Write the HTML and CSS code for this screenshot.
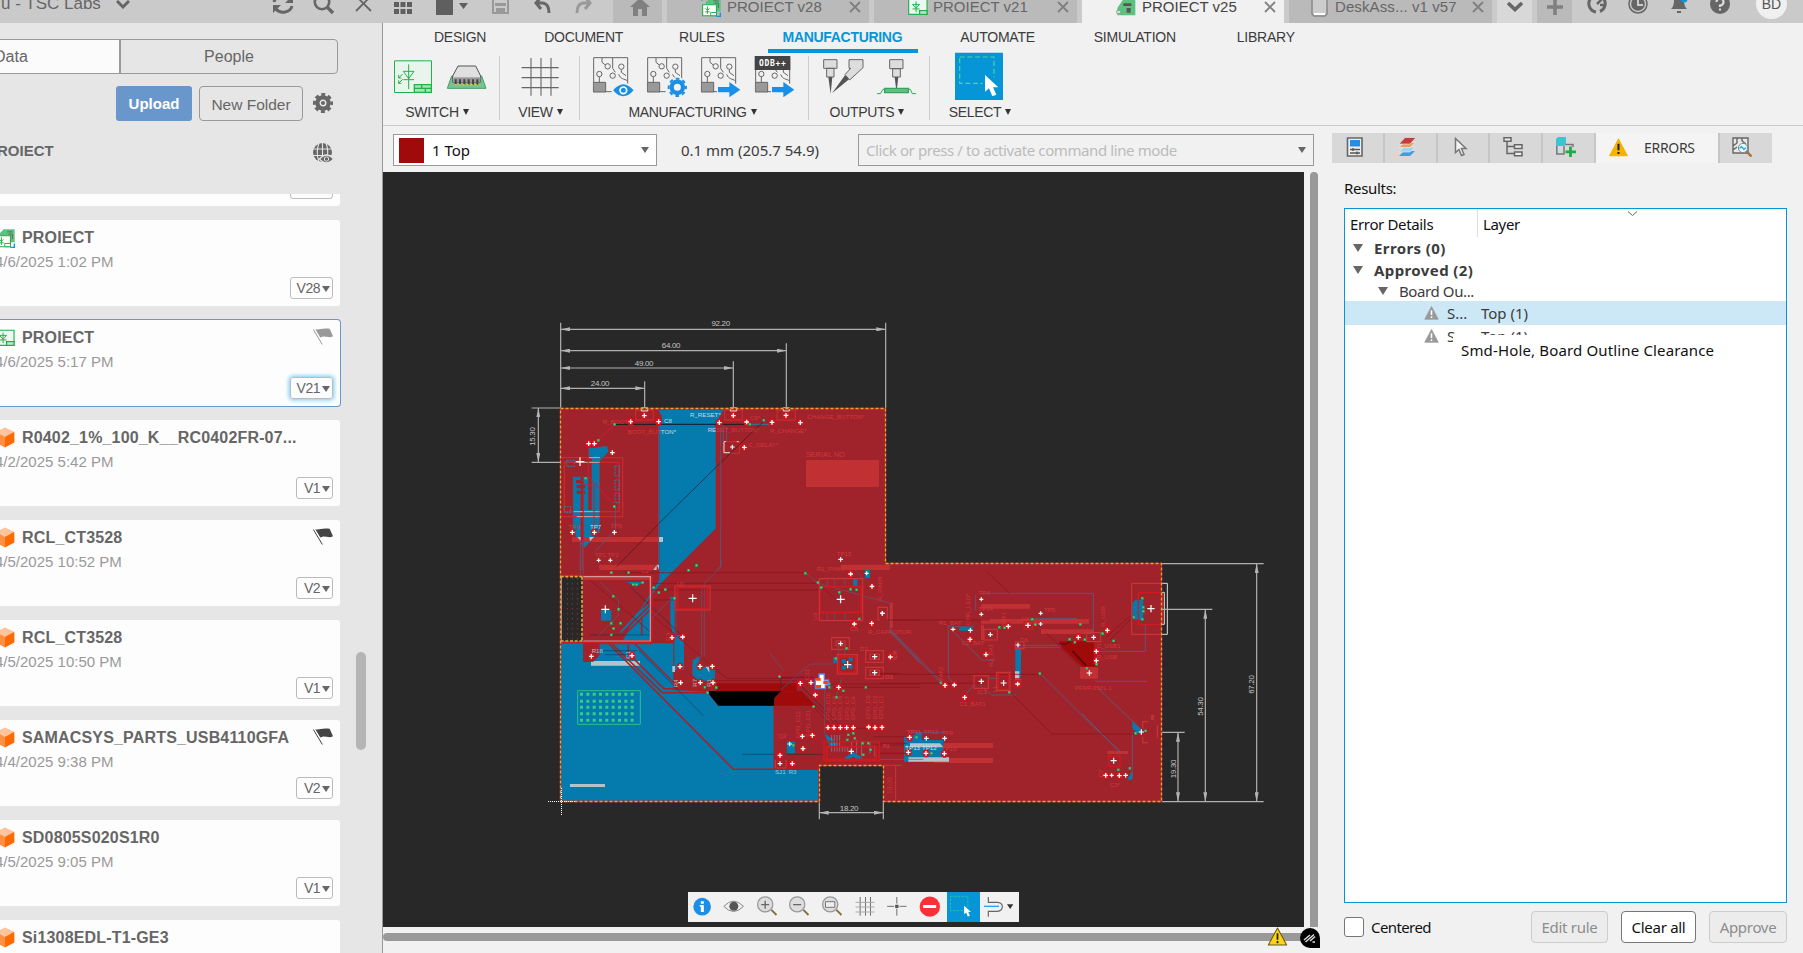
FILE: index.html
```
<!DOCTYPE html>
<html lang="en">
<head>
<meta charset="utf-8">
<title>PROIECT v25</title>
<link rel="stylesheet" href="styles.css">
</head>
<body>
<svg class="defs" width="0" height="0">
  <defs>
    <symbol id="cube" viewBox="0 0 60 62"><path d="M30 1 58 14 30 29 3 14Z" fill="#ffc49c"/><path d="M3 14 30 29V61L3 46Z" fill="#ff8f45"/><path d="M30 29 58 14V46L30 61Z" fill="#ff6a00"/></symbol>
    <symbol id="flag" viewBox="0 0 60 50"><path d="M1 4 28 49" stroke="currentColor" stroke-width="3"/><path d="M7 3C20 6 26-2 50 2L60 24C46 32 36 20 22 28Z" fill="currentColor"/></symbol>
    <symbol id="x" viewBox="0 0 12 12"><path d="M1 1 11 11M11 1 1 11" stroke="currentColor" stroke-width="1.8" fill="none"/></symbol>
    <symbol id="brd" viewBox="0 0 62 62"><path d="M15 16 27 4H61V44H15Z" fill="#5cc280"/><path d="M38 12H54M42 19H54V34" stroke="#666" stroke-width="3" fill="none"/><path d="M5 24H48V58H5Z" fill="#fff" stroke="#22b14c" stroke-width="3.5"/><path d="M13 35 20 42 26 35M20 29V52M13 46H27" stroke="#22b14c" stroke-width="3" fill="none"/><path d="M30 48H48V58H30Z" fill="#fff" stroke="#22b14c" stroke-width="3"/><path d="M48 60H60V48M3 12V2H14" stroke="#1a8fe8" stroke-width="4" fill="none"/></symbol>
    <symbol id="sch" viewBox="0 0 62 54"><path d="M2 3H59V50H2Z" fill="#eef8f0" stroke="#22b14c" stroke-width="3.5"/><path d="M14 19H36L25 31ZM14 33H36M25 10V43" stroke="#22b14c" stroke-width="3" fill="none"/><path d="M36 38H59V50H36Z" fill="#bfe8cb" stroke="#22b14c" stroke-width="4"/></symbol>
    <symbol id="pcb" viewBox="0 0 126 126"><path d="M3 6H105V84M3 6V80M57 108H36M60 6V38M60 38 68 50M28 6V20L38 28M78 56C84 72 94 68 105 76M20 62V80M86 42V50L100 60" fill="none" stroke="#666" stroke-width="3"/><path d="M2 80H39V109H2Z" fill="#999" stroke="#666" stroke-width="3"/><g fill="#f1f1f1" stroke="#666" stroke-width="3"><circle cx="45" cy="32" r="8"/><circle cx="86" cy="33" r="8"/><circle cx="20" cy="55" r="8"/><circle cx="60" cy="60" r="8"/></g></symbol>
    <symbol id="arrow" viewBox="0 0 68 46"><path d="M0 15H34V0L67 23 34 46V31H0Z" fill="#1a8fe8"/></symbol>
    <symbol id="lens" viewBox="0 0 64 64"><path d="M46 44 62 60" stroke="#8c6d46" stroke-width="6"/><circle cx="27" cy="27" r="23.5" fill="#ddd" stroke="#999" stroke-width="4"/></symbol>
    <symbol id="cursor" viewBox="0 0 40 64"><path d="M0 0V50L12 40 22 64 34 59 24 37H40Z" fill="#fff"/></symbol>
    <symbol id="warn" viewBox="0 0 56 54"><path d="M28 2 54 51H2Z" fill="currentColor" stroke="currentColor" stroke-width="3" stroke-linejoin="round"/><path d="M28 16V35M28 40V46" stroke="var(--mark)" stroke-width="6"/></symbol>
    <marker id="pad" markerUnits="userSpaceOnUse" markerWidth="24" markerHeight="26" refX="12" refY="13"><ellipse cx="12" cy="13" rx="10" ry="12" fill="#cc151c"/><path d="M12 6V20M5 13H19" stroke="#fff" stroke-width="4"/></marker>
    <marker id="via" markerUnits="userSpaceOnUse" markerWidth="9" markerHeight="9" refX="4.5" refY="4.5"><path d="M0 0H9V9H0Z" fill="#2a9d55"/><path d="M2 2H6V6H2Z" fill="#5ee08c"/></marker>
    <marker id="tip" markerUnits="userSpaceOnUse" markerWidth="28" markerHeight="12" refX="28" refY="6" orient="auto-start-reverse"><path d="M28 6 0 0V12Z" fill="#b4b4b4"/></marker>
  </defs>
</svg>

<header class="topbar">
  <div class="team"><span>u - TSC Labs</span>
    <svg width="14" height="10" viewBox="0 0 14 10"><path d="M1 1 7 7 13 1" class="ic" stroke-width="3"/></svg></div>
  <div class="team-tools">
    <svg width="22" height="22" viewBox="0 0 22 22"><path d="M2 9A9 8 0 0 1 18 6M20 13A9 8 0 0 1 4 16" class="ic" stroke-width="3"/><path d="M21 2V10H13ZM1 20V12H9Z" fill="#666"/></svg>
    <svg width="22" height="22" viewBox="0 0 22 22"><circle cx="9" cy="9" r="7.2" class="ic" stroke-width="2.6"/><path d="M14 14 20 20" class="ic" stroke-width="3.4"/></svg>
    <svg width="17" height="17" viewBox="0 0 17 17"><path d="M1 1 16 16M16 1 1 16" class="ic" stroke-width="1.8"/></svg>
  </div>
  <div class="quick">
    <svg class="q1" width="18" height="19" viewBox="0 0 18 19"><path d="M0 0H5V5H0ZM6.500 0H11.500V5H6.500ZM13 0H18V5H13ZM0 7H5V12H0ZM6.500 7H11.500V12H6.500ZM13 7H18V12H13ZM0 14H5V19H0ZM6.500 14H11.500V19H6.500ZM13 14H18V19H13Z" fill="#5f5f5f"/></svg>
    <svg class="q2" width="32" height="20" viewBox="0 0 32 20"><path d="M0 0H17V20H0ZM23 8H32L27.500 14Z" fill="#5f5f5f"/></svg>
    <svg class="q3" width="17" height="19" viewBox="0 0 17 19"><path d="M1 1H14L16 3V18H1Z" fill="none" stroke="#999" stroke-width="2"/><path d="M3 8H14V11H3ZM4 13H13V18H4Z" fill="#999"/></svg>
    <svg class="q4" width="17" height="18" viewBox="0 0 17 18"><path d="M7 1 2 7 7 13M2 7H9Q15 8 15 17" class="ic" stroke-width="3"/></svg>
    <svg class="q5" width="17" height="18" viewBox="0 0 17 18"><path d="M10 1 15 7 10 13M15 7H8Q2 8 2 17" fill="none" stroke="#999" stroke-width="3"/></svg>
  </div>
  <div class="tabs">
    <div class="tab home"><svg width="20" height="18" viewBox="0 0 20 18"><path d="M10 0 20 9H17V18H12V11H8V18H3V9H0Z" fill="#808080"/></svg></div>
    <div class="tab"><svg class="ti" width="20" height="20"><use href="#brd"/></svg><span>PROIECT v28</span><svg class="close" width="12" height="12"><use href="#x"/></svg></div>
    <div class="tab t21"><svg class="ti" width="20" height="18"><use href="#sch"/></svg><span>PROIECT v21</span><svg class="close" width="12" height="12"><use href="#x"/></svg></div>
    <div class="tab active"><svg class="ti" width="20" height="18" viewBox="0 0 60 54"><path d="M4 30 20 6H58V52H4Z" fill="#5cc280"/><path d="M22 16H46V24H22ZM32 30H44V44H32Z" fill="#555"/><path d="M2 38H14V46H2Z" fill="#e8e8e8" stroke="#888" stroke-width="2"/></svg><span>PROIECT v25</span><svg class="close" width="12" height="12"><use href="#x"/></svg></div>
    <div class="tab desk"><svg class="ti" width="17" height="21" viewBox="0 0 17 21"><path d="M1 0H16V18L14 20H3L1 18Z" fill="#ccc" stroke="#888" stroke-width="1.500"/><path d="M3 17H14V19H3Z" fill="#fff"/></svg><span>DeskAss... v1 v57</span><svg class="close" width="12" height="12"><use href="#x"/></svg></div>
    <div class="mini light"><svg width="16" height="10" viewBox="0 0 16 10"><path d="M1 1 8 7.500 15 1" class="ic" stroke-width="3.600"/></svg></div>
    <div class="mini"><svg width="16" height="16" viewBox="0 0 16 16"><path d="M8 0V16M0 8H16" stroke="#808080" stroke-width="3.600"/></svg></div>
  </div>
  <div class="account">
    <svg width="20" height="20" viewBox="0 0 20 20"><path d="M4 4A8.500 8.500 0 0 0 9 18M13 17.500A8.500 8.500 0 0 0 16 4" class="ic" stroke-width="3"/><path d="M10 10 17 3M13 11H18" class="ic" stroke-width="2.500"/></svg>
    <svg width="20" height="20" viewBox="0 0 20 20"><circle cx="10" cy="10" r="9" class="ic" stroke-width="1.500"/><circle cx="10" cy="10" r="6.800" fill="#666"/><path d="M10 5V11H15" fill="none" stroke="#ccc" stroke-width="2"/></svg>
    <svg width="20" height="20" viewBox="0 0 20 20"><path d="M2 15Q5 12 5 7A5 5 0 0 1 15 7Q15 12 18 15ZM8 17H12V19H8Z" fill="#666"/><circle cx="15" cy="5" r="3.500" fill="#0696d7"/></svg>
    <svg width="20" height="20" viewBox="0 0 20 20"><circle cx="10" cy="10" r="10" fill="#666"/><path d="M6.500 8A3.500 3.500 0 1 1 10 11.500V13" fill="none" stroke="#ddd" stroke-width="2.200"/><path d="M9 14.500H11V16.500H9Z" fill="#ddd"/></svg>
    <span class="avatar">BD</span>
  </div>
</header>

<div class="app">
<aside class="side">
  <div class="seg"><span class="on">Data</span><span>People</span></div>
  <div class="actions">
    <span class="btn-up">Upload</span><span class="btn-nf">New Folder</span>
    <svg width="20" height="20" viewBox="0 0 20 20"><circle cx="10" cy="10" r="5.600" fill="none" stroke="#666" stroke-width="4.200"/><circle cx="10" cy="10" r="8.600" fill="none" stroke="#666" stroke-width="2.800" stroke-dasharray="3.900 2.850" stroke-dashoffset="1.950"/><circle cx="10" cy="10" r="2" fill="#666"/></svg>
  </div>
  <div class="crumb"><span>PROIECT</span>
    <svg width="20" height="20" viewBox="0 0 20 20"><circle cx="9.500" cy="9.500" r="9.500" fill="#666"/><path d="M0 6H19M0 12.500H19M9.500 0V19M6 0Q2.500 9.500 6 19M13 0Q16.500 9.500 13 19" stroke="#e6e6e6" stroke-width="1.100" fill="none"/><path d="M6.500 16Q13.500 8 20.500 16 13.500 24 6.500 16Z" fill="#666" stroke="#e6e6e6" stroke-width="1.300"/><circle cx="13.500" cy="16" r="2.200" fill="#666" stroke="#e6e6e6"/></svg></div>
  <div class="scroller">
  <div class="list">
    <div class="card first"><div class="ver w"></div></div>
    <div class="card"><b><svg width="20" height="20"><use href="#brd"/></svg>PROIECT</b><i>4/6/2025 1:02 PM</i><div class="ver w">V28<s></s></div></div>
    <div class="card sel"><b><svg width="20" height="18"><use href="#sch"/></svg>PROIECT</b><svg class="flag dim" width="20" height="17"><use href="#flag"/></svg><i>4/6/2025 5:17 PM</i><div class="ver w glow">V21<s></s></div></div>
    <div class="card"><b><svg width="20" height="21"><use href="#cube"/></svg>R0402_1%_100_K__RC0402FR-07...</b><i>4/2/2025 5:42 PM</i><div class="ver">V1<s></s></div></div>
    <div class="card"><b><svg width="20" height="21"><use href="#cube"/></svg>RCL_CT3528</b><svg class="flag" width="20" height="17"><use href="#flag"/></svg><i>4/5/2025 10:52 PM</i><div class="ver">V2<s></s></div></div>
    <div class="card"><b><svg width="20" height="21"><use href="#cube"/></svg>RCL_CT3528</b><i>4/5/2025 10:50 PM</i><div class="ver">V1<s></s></div></div>
    <div class="card"><b><svg width="20" height="21"><use href="#cube"/></svg>SAMACSYS_PARTS_USB4110GFA</b><svg class="flag" width="20" height="17"><use href="#flag"/></svg><i>4/4/2025 9:38 PM</i><div class="ver">V2<s></s></div></div>
    <div class="card"><b><svg width="20" height="21"><use href="#cube"/></svg>SD0805S020S1R0</b><i>4/5/2025 9:05 PM</i><div class="ver">V1<s></s></div></div>
    <div class="card"><b><svg width="20" height="21"><use href="#cube"/></svg>Si1308EDL-T1-GE3</b></div>
  </div>
  <div class="rail"><div class="thumb"></div></div>
  </div>
</aside>

<main class="main">
  <section class="ribbon">
    <nav><span>DESIGN</span><span>DOCUMENT</span><span class="n-rules">RULES</span><span class="on">MANUFACTURING</span><span class="n-auto">AUTOMATE</span><span class="n-sim">SIMULATION</span><span class="n-lib">LIBRARY</span></nav>
    <div class="groups">
      <div class="group g-switch"><div class="icons">
        <svg viewBox="18 156 162 144"><path d="M43.500 182.500H154.500V277.500H43.500Z" fill="#e9f5ec" stroke="#22b14c" stroke-width="3"/><path d="M86 193V267M70 214H102L86 236ZM70 239H102M68 222 56 234M56 234V225M56 234H64M68 238 56 250M56 250V241M56 250H64" fill="none" stroke="#22b14c" stroke-width="3"/><path d="M103 254H154V277H103ZM103 265H154M125 254V265M136 265V277" fill="#a9e2ba" stroke="#22b14c" stroke-width="4"/></svg>
        <svg viewBox="180 156 162 144"><path d="M215 228 202 265H318L305 228Z" fill="#6fc98f" stroke="#4a9b68" stroke-width="3"/><path d="M234 198H287L302 228V247H218V228Z" fill="#e0e0e0" stroke="#555" stroke-width="3"/><path d="M220 232H301V247H220Z" fill="#999"/><path d="M227 238V254M240 238V254M253 238V254M266 238V254M279 238V254M292 238V254" stroke="#444" stroke-width="6"/><path d="M224 254H298" stroke="#f0c24a" stroke-width="4" stroke-dasharray="6 6"/></svg>
      </div><label>SWITCH<s></s></label></div>
      <div class="group g-view"><div class="icons">
        <svg viewBox="400 156 162 144"><path d="M454 174V287M484 174V287M514 174V287M426 203H537M426 233H537M426 263H537" stroke="#666" stroke-width="3.300"/></svg>
      </div><label>VIEW<s></s></label></div>
      <div class="group g-mfg"><div class="icons">
        <svg viewBox="621 156 162 144"><use href="#pcb" x="641" y="167" width="126" height="126"/><path d="M699 271Q733 230 767 271 733 312 699 271Z" fill="#1a8fe8" stroke="#f1f1f1" stroke-width="5"/><circle cx="733" cy="271" r="10" fill="#1a8fe8" stroke="#fff" stroke-width="5"/></svg>
        <svg viewBox="621 156 162 144"><use href="#pcb" x="641" y="167" width="126" height="126"/><circle cx="733" cy="262" r="31" fill="#f1f1f1"/><circle cx="733" cy="262" r="17" fill="none" stroke="#1a8fe8" stroke-width="13"/><circle cx="733" cy="262" r="26" fill="none" stroke="#1a8fe8" stroke-width="6" stroke-dasharray="11 9.420" stroke-dashoffset="5.500"/></svg>
        <svg viewBox="621 156 162 144"><use href="#pcb" x="641" y="167" width="126" height="126"/><path d="M690 255H780V292H690Z" fill="#f1f1f1"/><use href="#arrow" x="693" y="246" width="68" height="46"/></svg>
        <svg viewBox="621 156 162 144"><use href="#pcb" x="641" y="167" width="126" height="126"/><path d="M641 168H748V210H641Z" fill="#444"/><text x="695" y="198" class="odb">ODB++</text><path d="M690 255H780V292H690Z" fill="#f1f1f1"/><use href="#arrow" x="693" y="246" width="68" height="46"/></svg>
      </div><label>MANUFACTURING<s></s></label></div>
      <div class="group g-out"><div class="icons">
        <svg viewBox="1304 156 162 144"><g fill="#ddd" stroke="#666" stroke-width="3"><path d="M1330 179H1370V205H1330ZM1339 205H1361V231H1339Z"/><path d="M1406 179H1448V203L1408 240 1394 224 1411 205H1406Z"/></g><path d="M1344 231H1356L1351 282ZM1394 226 1406 238 1355 280Z" fill="#555"/></svg>
        <svg viewBox="1466 156 162 144"><g fill="#ddd" stroke="#666" stroke-width="3"><path d="M1528 179H1568V206H1528ZM1537 206H1560V231H1537Z"/></g><path d="M1543 231H1554L1550 264H1547Z" fill="#555"/><path d="M1490 281H1500L1508 268H1590L1596 281H1607" fill="none" stroke="#3aa262" stroke-width="3"/><path d="M1513 265H1584V278H1513Z" fill="#5cc280" stroke="#3aa262" stroke-width="4"/></svg>
      </div><label>OUTPUTS<s></s></label></div>
      <div class="group g-sel"><div class="icons">
        <svg viewBox="1716 156 162 144"><path d="M1725 158H1869V300H1725Z" fill="#0696d7"/><path d="M1739 171H1842V250H1739Z" fill="none" stroke="#4fd39a" stroke-width="3.500" stroke-dasharray="15 8"/><path d="M1808 232H1850V262H1808Z" fill="#0696d7"/><use href="#cursor" x="1815" y="225" width="40" height="64"/></svg>
      </div><label>SELECT<s></s></label></div>
    </div>
  </section>

  <div class="work">
    <section class="editor">
      <div class="cmdrow">
        <div class="layer"><em></em><span>1 Top</span><s></s></div>
        <div class="coord">0.1 mm (205.7 54.9)</div>
        <div class="cmd"><span>Click or press / to activate command line mode</span><s></s></div>
      </div>
      <div class="stage">
        <div class="canvas">
        <svg class="board" width="921" height="755" viewBox="383 172 921 755">
          <path d="M560.500 408.500H885.500V563.500H1161.500V801.500H883.500V765.500H819.500V801.500H560.500Z" fill="#a0222b"/>
          <!-- bottom copper -->
          <g transform="translate(540 560) scale(.33333)">
            <path d="M61 250H130V305H160L178 285V250H400V390L500 395 535 437H703V628H835V722H61Z" fill="#057aad"/>
            <path d="M358-450H550L528-410V-95L358 75L245 225 240 215 300 150 358 60Z" fill="#057aad"/>
            <path d="M260 66H310L290 80ZM290 160 330 128V240H250ZM391 110H404V240L391 190ZM403 225H432V330H403ZM458 300 478 288V320H525V362H475L458 345ZM183 150H214V182H183ZM905 298H918V310H905ZM926 292H938V304H926ZM906 318H918V328H906ZM928 316H938V326H928Z" fill="#057aad"/>
            <path d="M130 46H335V60H130ZM178 14H350V28H178ZM903 14H1050V30H903ZM1050 128H1058V203H1050Z" fill="#c13033"/>
            <path d="M62 50H127V243H62Z" fill="#282828"/>
            <path d="M82 55V240M97 55V240M112 55V240" stroke="#c33" stroke-width="3" stroke-dasharray="3 12"/>
            <path d="M500 393H725L703 415V437H535Z" fill="#000"/>
            <path d="M703 415 722 394H785L825 437H703Z" fill="#a00a0a"/>
            <path d="M530 370H770V393H530Z" fill="#a00a0a"/>
            <path d="M153 303H300V317H153ZM90 672H195V681H90ZM397 318H405V336H397ZM497 320 508 320V338ZM350 14H357V30Z" fill="#b3c3cb"/>
            <path d="M853 520 890 545V560H870ZM905 600 940 575 975 600H955L940 590 925 600ZM740 545H765V580H740ZM880 290H892V310H880ZM940 55H952V80H940ZM975 30H990V55H975ZM1092 530H1104V600H1092Z" fill="#057aad"/>
            <g fill="none" stroke="#b01c24" stroke-width="4.500">
              <path d="M205 250 580 628H835V612M214 250 367 398H503M265 255V280L372 386H500M285 252 405 372M703 437V630M785 590V601H1140M240 225 437 30M252 225 470 15M305 225V170"/>
            </g>
            <g fill="none" stroke="#0b2c44" stroke-width="1.800" opacity=".8">
              <path d="M295 270 490 467M607 583H850M180 272H290M195 284H270M270 80 440 240M722 352V394M722 352H820M150 225H330M785 380 905 500"/>
            </g>
            <g fill="none" stroke="#86141b" stroke-width="2.500" opacity=".8">
              <path d="M330 90H840M330 70H840M250 38H610L795 38M330 160 560 355H770M500 362H770M530 380H760M790 400 900 505 1000 505M820 440 880 505M1058 180H1140M330 120H415M860 372H1140M880 382H1140M150 60 330 215M835 70 900 130M720 390 780 340M1000 530H1140M1000 555H1140"/>
            </g>
            <g fill="none" stroke="#4c6480" stroke-width="1.800">
              <path d="M543 0V20L493 70V290M485 80V290L458 308V345M400 110 330 180M408 100V225M180 65 235 120V165L175 228M722 390 810 312H880M895 240V300M905 355 888 410M915 262V290M795 38 835 70 1050 130V210L1140 300M854 390V520M1050 215 1140 310M690 280 730 330M121 0V48M130 0V48M945 30 975 60M898 130V95M862 58V80M884 58V80M915 58V80M942 58V80M862 157V180M884 157V180M915 157V180"/>
              <path d="M875 525V575M883 525V575M891 525V575M899 525V575M907 560V575M915 560V575M923 560V575M935 545V580M950 540V580M965 550V590M990 545V580M1005 555V590" stroke="#98a"/>
            </g>
            <g fill="none" stroke="#d01a20" stroke-width="5">
              <path d="M132 250H335V45M60 247H332M60 47H335M413 82H502V146H413ZM840 80H963V157H840ZM852 545H1018V602H852ZM898 290H947V338H898ZM860 560H1008V598H860Z"/>
            </g>
            <g fill="none" stroke="#cc3336" stroke-width="3.500">
              <path d="M838 56H968V182H838ZM875 233H928V268H875ZM892 284H952V342H892ZM977 272H1030V307H977ZM990 282H1018V298H990ZM977 322H1030V356H977ZM990 330H1018V346H990ZM1014 142H1042V180H1014ZM405 78H510V150H405ZM706 598H738V624H706ZM888 243H915V258H888Z"/>
            </g>
            <path d="M130 50H331V243H130" fill="none" stroke="#d6c4c8" stroke-width="3.500" opacity=".75"/>
            <path d="M126 50V243M62 50H127M62 243H127" stroke="#c9b040" stroke-width="5" stroke-dasharray="9 5"/>
            <path d="M63 50V243" stroke="#ddd" stroke-width="4"/>
            <path d="M130 250H178V285L160 305H130ZM703 545H740V600H703Z" fill="#a0222b"/>
            <path class="pads" d="M154 289 276 287 396 233 428 231 420 320 480 319 517 319 422 368 481 368 519 368 932 42 996 79 943 192 995 190 1052 290 781 370 813 368 896 382 826 405 864 503 882 503 901 503 920 503 940 503 986 501 1005 503 1026 503 787 529 817 526 789 566 720 586 757 611 1108 532 1105 577"/>
            <path class="plus" d="M446 115H470M458 103V127M890 118H914M902 106V130M184 148H208M196 136V160M912 314H934M923 303V325M1020 160H1034M1027 153V167M895 251H909M902 244V258M996 290H1012M1004 282V298M996 338H1012M1004 330V346M713 611H727M720 604V618M926 574H942M934 566V582M742 552H756M749 545V559M974 40H986M980 34V46"/>
            <path class="vias" d="M214 38 266 38 308 68 341 83 376 89 357 98 404 115 220 109 236 148 214 190 242 190 221 206 214 225 446 31 470 16 796 40 834 68 844 83 898 97 932 88 950 90 958 177 719 350 529 383 503 398 495 382 868 372 868 382 888 296 920 265 910 393 890 412 978 382 821 440 940 520 925 525 922 540 945 535 968 550 985 550 992 570 970 585 760 556 1128 532 280 74 290 74"/>
            <g><path d="M837 342H853V360H866V375H856V386H826V358H837Z" fill="#fff" stroke="#5b7ff0" stroke-width="4"/><path d="M828 354H842V362H828ZM828 375H843V385H828ZM850 363H864V372H850Z" fill="#f40"/></g>
            <path d="M113 392H301V493H113Z" fill="none" stroke="#27c28f" stroke-width="3"/>
            <g stroke="#35cf83" stroke-width="9" stroke-dasharray="9 10"><path d="M120 403H285M120 424H285M120 442H285M120 461H285M120 481H285"/></g>
            <g class="silk">
              <text x="830" y="33">R1_PINHI</text><text x="303" y="38">C2</text><text x="984" y="221">R_CAPACITOR</text><text x="960" y="274">D2</text><text x="1035" y="356">D3</text><text x="410" y="78">U1</text><text x="930" y="213">C5</text><text x="1028" y="562">X1</text><text x="715" y="535">Q2</text><text x="1100" y="522">TP11</text>
              <text transform="translate(830 182) rotate(-90)">U3</text><text transform="translate(1026 122) rotate(-90)">R_PINHI</text><text transform="translate(780 535) rotate(-90)">EPD_C12</text><text transform="translate(810 530) rotate(-90)">EPD_C11</text><text transform="translate(870 480) rotate(-90)">EPD_C10</text><text transform="translate(888 480) rotate(-90)">EPD_C9</text><text transform="translate(906 480) rotate(-90)">EPD_C8</text><text transform="translate(926 480) rotate(-90)">EPD_C7</text><text transform="translate(946 480) rotate(-90)">EPD_C6</text><text transform="translate(990 478) rotate(-90)">EPD_C5</text><text transform="translate(1010 478) rotate(-90)">EPD_C2</text><text transform="translate(1030 478) rotate(-90)">EPD_C1</text><text transform="translate(806 360) rotate(-90)">C11</text><text transform="translate(390 242) rotate(-90)">C3</text><text transform="translate(1070 295) rotate(-90)">C4</text>
              <g fill="#a9c4d4"><text x="155" y="278">R18</text><text x="705" y="642">SJ1</text><text x="746" y="642">R3</text><text transform="translate(413 382) rotate(-90)">R4</text><text transform="translate(270 296) rotate(-90)">C1</text><text transform="translate(472 380) rotate(-90)">R7</text><text transform="translate(512 380) rotate(-90)">R1</text></g>
            </g>
            <g class="rdim"><path d="M1030 616H1085M1067 618V720"/><text transform="translate(1057 702) rotate(-90)">10.00</text></g>
          </g>
          <!-- upper left -->
          <g transform="translate(520 310) scale(.33333)">
            <path d="M160 500 205 500V415L262 408 265 425 238 455V665L192 715 175 690 160 665Z" fill="#057aad"/>
            <path d="M156 681H417V696H156ZM858 450H1077V531H858ZM238 766H410V780H238ZM962 766H1110V780H962Z" fill="#c13033"/>
            <path d="M417 681H429V696H417ZM172 681H190V695H184ZM208 681H222L210 694ZM410 766V780H400Z" fill="#b3c3cb"/>
            <path d="M587 330H602V655L587 670ZM585 340H605V350H585Z" fill="#a0222b"/>
            <path d="M398 303H412L425 316V345H400ZM182 500H190V700H182ZM205 440H215V600H205Z" fill="#b01c24"/>
            <path d="M170 470H192V482H170ZM168 510H190V520H168ZM170 525H195V535H170ZM170 542H195V552H170Z" fill="#a0222b"/>
            <g fill="none" stroke="#c9282c" stroke-width="4"><path d="M120 443H308V620H120M133 457H297V605H133ZM347 300H400V330H347ZM614 300H667V330H614ZM771 300H826V330H771ZM610 395H658V430H610Z"/></g>
            <path d="M205 443H240M170 620H240M170 457H240M160 605H240" stroke="#ddd" stroke-width="3" opacity=".7"/>
            <path d="M140 452H163V469H140ZM132 590H152V607H132ZM285 468H298V498H285ZM285 510H298V540H285ZM285 550H298V578H285Z" fill="none" stroke="#1a8fc0" stroke-width="2.500" stroke-dasharray="6 3"/>
            <path d="M284 343H690" stroke="#101c28" stroke-width="3"/><path d="M690 343H755" stroke="#2a7aa0" stroke-width="3"/>
            <path d="M602 458 417 640" stroke="#0c3e5c" stroke-width="3"/><path d="M417 640 290 770M735 330 602 458" stroke="#5e1520" stroke-width="2.500"/>
            <path d="M284 343 205 415V500L280 580M190 525H222V660M190 545V780" stroke="#c8202a" stroke-width="3" fill="none"/>
            <path d="M416 345V765M602 350V770L590 780M160 500V660M187 690V780M237 455V670M286 590V660L225 725M181 690V780M610 345V395M620 350V395" stroke="#3f6c94" stroke-width="2" fill="none"/>
            <path class="pads" d="M373 317 332 335 416 335 640 317 598 338 680 336 798 316 756 337 841 338 673 412 206 401 223 401 277 428 157 667 223 667"/>
            <path class="plus" d="M167 455H193M180 442V468M230 751H242M236 745V757M265 751H277M271 745V757M955 748H969M962 741V755M630 411H644M637 404V418M276 667H290M283 660V674"/>
            <path class="vias" d="M284 343 235 391 197 505 283 590 690 343 732 331 530 766"/>
            <path d="M364 293H383V303H364ZM631 293H650V303H631ZM790 293H808V303H790Z" fill="none" stroke="#ddd" stroke-width="3"/>
            <path d="M618 395H612V428H630M650 395H656" stroke="#ddd" stroke-width="3" fill="none"/>
            <g class="silk">
              <text x="248" y="342">R_BOOT*</text><text x="323" y="372">BOOT_BUT<tspan fill="#c4dae6">TON*</tspan></text><text x="563" y="366"><tspan fill="#c4dae6">RE</tspan>SET_BUTTON*</text><text x="690" y="330">C9*</text><text x="862" y="327">CHANGE_BUTTON*</text><text x="750" y="370">R_CHANGE*</text><text x="685" y="411">C_DELAY*</text><text class="sn" x="858" y="440">SERIAL NO</text><text x="145" y="657">TP8</text><text x="210" y="657"><tspan fill="#c4dae6">TP7</tspan></text><text x="272" y="654">TP6</text><text x="225" y="741">TP1</text><text x="262" y="741">TP2</text><text x="950" y="738">TP15</text>
              <g fill="#c4dae6"><text x="510" y="321">R_RESET*</text><text x="432" y="339">C8</text></g>
            </g>
            <g class="gdim">
              <path d="M122 38V294M1097 38V294M799 100V294M640 154V294M374 214V294M35 294H120M35 457H120"/>
              <path class="ar" d="M122 58H1097"/><path class="ar" d="M122 122H799"/><path class="ar" d="M122 174H640"/><path class="ar" d="M122 235H374"/><path class="ar" d="M55 294V457"/>
              <text x="602" y="49">92.20</text><text x="453" y="115">64.00</text><text x="372" y="167">49.00</text><text x="240" y="227">24.00</text><text transform="translate(46 380) rotate(-90)">15.30</text>
            </g>
          </g>
          <!-- right half -->
          <g transform="translate(880 540) scale(.33333)">
            <path d="M303 192H450V206H303ZM303 237H627V251H303ZM483 268H640V282H483ZM303 254H312V300H303ZM600 381H654V416H600ZM682 633H744V642H682ZM0 75H30V90H0ZM30 188H38V263H30ZM100 609H339V624H100ZM160 654H339V669H160ZM813 525H822V540H813Z" fill="#c13033"/>
            <path d="M72 590H95L110 580H125V600H190V665H72ZM406 320H423V412H406ZM765 180H790V240H765L757 225V190ZM757 543 785 570V580H772L757 565ZM757 695V719H742L752 700ZM238 262H278V272H238Z" fill="#057aad"/>
            <path d="M90 610H180L190 622H90ZM85 652H207V665H85ZM405 394H418V415H405Z" fill="#b3c3cb"/>
            <path d="M537 304H642V350L652 380H606L545 322Z" fill="#a00a0a"/><path d="M577 333 618 376" stroke="#5a0808" stroke-width="5"/><path d="M537 312H560L570 305" stroke="#5a0808" stroke-width="3" fill="none"/>
            <g fill="none" stroke="#476a90" stroke-width="2.200">
              <path d="M303 160H640V300M287 165V210M205 262V410L222 435M205 260H280M30 275 185 432M30 268 185 425M425 316H545M425 322H545M648 334H796V255M645 420 650 424H801M605 520 722 640M480 400 640 560 722 635M757 575V715M220 275 305 360H345M250 470 280 437M300 437 335 465H410M450 236H590M325 415H350M655 445 785 570M88 577H195M0 658H130"/>
            </g>
            <g fill="none" stroke="#8a151c" stroke-width="2.500">
              <path d="M0 240H330M0 403H480M0 430H300M390 455 515 582H765M500 280 600 380M690 300 757 232M680 290 750 228M0 610H80M0 640H80M320 95 390 160M0 400H60"/>
            </g>
            <g fill="none" stroke="#d01a20" stroke-width="4"><path d="M775 158H848V253H775ZM686 648H720V680H686ZM355 400H386V448H355ZM432 245H458V268H432Z"/></g>
            <g fill="none" stroke="#cc3336" stroke-width="3.500"><path d="M755 130H845M755 130V283H845M282 407H325V445H282ZM350 397H390V452H350ZM312 268H352V300H312ZM406 306H432V326H406ZM406 418H422V440H406ZM803 545H788V565M788 590V608H803M832 555V595M620 278H662V305H620Z"/></g>
            <path d="M845 130H862V283H845M845 157H853V253H845" fill="none" stroke="#ddd" stroke-width="3"/>
            <path class="pads" d="M195 436 223 435 254 472 318 344 270 298 385 259 413 432 595 292 682 271 649 334 649 362 89 592 85 637 138 640 193 641 677 706 718 707 6 562 31 351"/>
            <path class="plus" d="M802 206H824M813 195V217M296 424H312M304 416V432M362 429H380M371 420V438M324 284H338M331 277V291M436 256H452M444 248V264M407 315H421M414 308V322M620 399H636M628 391V407M692 662H710M701 653V671M776 576H792M784 568V584M730 706H744M737 699V713M298 178H310M304 172V184M298 223H310M304 217V229M476 220H488M482 214V226M476 252H488M482 246V258M212 268H226M219 262V274M264 271H278M271 264V278M132 595H146M139 588V602M187 595H201M194 588V602M634 292H648M641 285V299M689 706H701M695 700V712M0 220H14M7 213V227"/>
            <path class="vias" d="M358 262 374 264 457 238 466 254 388 457 480 401 569 298 585 307 601 253 615 299 668 281 701 303 650 373 621 385 183 429 110 592 155 640 797 573 767 580 750 685 715 690 787 175 787 238 762 232 80 620 790 214 790 202"/>
            <g class="silk">
              <text x="295" y="166">TP4</text><text x="492" y="215">TP5</text><text x="295" y="214">TP14</text><text x="176" y="256">R1_BAT</text><text x="245" y="314">C2_BAT</text><text x="425" y="243">U4</text><text x="420" y="305">C6</text><text x="650" y="324">C_USB1</text><text x="650" y="356">R_USB</text><text x="585" y="450">PFMF.0501.1</text><text x="292" y="463">IC1</text><text x="238" y="498">C1_BAT1</text><text x="690" y="741">C3*</text><text x="6" y="624">X1</text><text x="15" y="416">D3</text><text x="185" y="585">TP9</text><text x="185" y="632">TP10</text><text x="80" y="583">TP11</text><text x="130" y="583">TP13</text>
              <text transform="translate(271 255) rotate(-90)">CHG_LED*</text><text transform="translate(378 260) rotate(-90)">BAT1</text><text transform="translate(340 380) rotate(-90)">R2_BAT</text><text transform="translate(188 425) rotate(-90)">BAT2</text><text transform="translate(674 260) rotate(-90)">R_USB</text><text transform="translate(350 457) rotate(-90)">L1</text><text transform="translate(668 712) rotate(-90)">C7</text><text transform="translate(52 360) rotate(-90)">C4</text>
              <g fill="#d5e2ea"><text x="76" y="630">TP13</text><text x="126" y="630">TP12</text></g>
            </g>
            <g class="gdim"><path d="M845 71H1151M845 208H997M845 577H914M845 785H1151"/><path class="ar" d="M1130 71V785"/><path class="ar" d="M976 208V785"/><path class="ar" d="M894 577V785"/>
              <text transform="translate(1121 434) rotate(-90)">67.20</text><text transform="translate(968 500) rotate(-90)">54.30</text><text transform="translate(887 687) rotate(-90)">19.30</text></g>
          </g>
          <g transform="translate(540 560) scale(.33333)" class="gdim"><path d="M838 722V778M1030 722V778"/><path class="ar" d="M838 758H1030"/><text x="927" y="752">18.20</text></g>
          <path d="M560.500 408.500H885.500V563.500H1161.500V801.500H883.500V765.500H819.500V801.500H560.500Z" fill="none" stroke="#d01818" stroke-width="1.300"/>
          <path d="M560.500 408.500H885.500V563.500H1161.500V801.500H883.500V765.500H819.500V801.500H560.500Z" fill="none" stroke="#c9b040" stroke-width="1.300" stroke-dasharray="3 2"/>
          <path d="M548 801.500H575M561.500 788V815" stroke="#fff" stroke-dasharray="1 1"/>
        </svg>
        <div class="navbar">
          <svg viewBox="0 0 96 90"><circle cx="44" cy="44" r="26.500" fill="#1a8fe8"/><path d="M40 28H49V35H40ZM37 39H49V60H40V44H37Z" fill="#fff"/></svg>
          <svg viewBox="0 0 96 90"><path d="M13 43Q42 12 72 43 42 74 13 43Z" fill="#eee" stroke="#888" stroke-width="3"/><circle cx="43" cy="43" r="13.500" fill="#555"/></svg>
          <svg viewBox="0 0 96 90"><use href="#lens" x="12" y="11" width="62" height="62"/><path d="M26 38H50M38 26V50" stroke="#666" stroke-width="4"/></svg>
          <svg viewBox="0 0 96 90"><use href="#lens" x="12" y="11" width="62" height="62"/><path d="M26 38H50" stroke="#666" stroke-width="4"/></svg>
          <svg viewBox="0 0 96 90"><use href="#lens" x="12" y="11" width="62" height="62"/><path d="M24 29H52V46H24Z" stroke="#777" fill="#eee" stroke-width="3"/></svg>
          <svg viewBox="0 0 96 90"><path d="M32 15V71M48 15V71M63 15V71" stroke="#666" stroke-width="2.800"/><path d="M18 31H75M18 45H75M18 60H75" stroke="#aaa" stroke-width="3"/></svg>
          <svg viewBox="0 0 96 90"><path d="M46 15V35M46 50V71M17 43H38M54 43H75" stroke="#666" stroke-width="2.800"/><path d="M41 38H51V48H41Z" fill="#555"/></svg>
          <svg viewBox="0 0 96 90"><circle cx="46" cy="44" r="30.500" fill="#fb2f35"/><path d="M26 39H65V48H26Z" fill="#fff"/></svg>
          <svg class="hot" viewBox="0 0 96 90"><path d="M10 13H62V56H10Z" fill="none" stroke="#2bc0a0" stroke-width="3" stroke-dasharray="7 4"/><use href="#cursor" x="50" y="41" width="22" height="33"/></svg>
          <svg class="wide" viewBox="0 0 117 90"><path d="M25 15V31H52Q67 32 67 44T52 58H25V74" fill="none" stroke="#666" stroke-width="3.500"/><path d="M12 43H57" stroke="#3a9bf0" stroke-width="4"/><path d="M81 37H100L90.500 51Z" fill="#333"/></svg>
        </div>
        </div>
        <div class="vbar"><div></div></div>
        <div class="hbar"><div></div>
          <svg class="hw" width="21" height="19" viewBox="0 0 56 54"><path d="M28 3 54 51H2Z" fill="#fbd31c" stroke="#6b5a10" stroke-width="3" stroke-linejoin="round"/><path d="M28 18V36M28 40V46" stroke="#222" stroke-width="5"/></svg>
          <svg class="hb" width="20" height="20" viewBox="0 0 20 20"><path d="M10 0A10 10 0 0 1 20 10V20H10A10 10 0 0 1 10 0Z" fill="#000"/><path d="M4 12 10 7M5.500 14 14 6.500M10 13 15 8.500M12.500 14H15" stroke="#ddd" stroke-width="1.500"/></svg>
        </div>
      </div>
    </section>

    <section class="panel">
      <div class="ptabs">
        <span><svg width="20" height="20" viewBox="0 0 20 20"><path d="M2.500 1H17V19H2.500Z" fill="#eee" stroke="#666" stroke-width="1.600"/><path d="M5 3H15V9.500H5Z" fill="#2b8ae2"/><path d="M5 12.500H15M5 16H15M8 11V14M12 14.500V17.500" stroke="#555" stroke-width="1.400"/></svg></span>
        <span><svg width="20" height="20" viewBox="0 0 20 20"><path d="M6 14H17L12 19H1Z" fill="#3f9fe0"/><path d="M6 10H17L12 15H1Z" fill="#9fd2ef" stroke="#eee" stroke-width=".6"/><path d="M6 5.500H17L12 10.500H1Z" fill="#ee9a66" stroke="#eee" stroke-width=".6"/><path d="M7 .5H18L12 7H1Z" fill="#c43c3c" stroke="#eee" stroke-width=".6"/></svg></span>
        <span><svg width="20" height="20" viewBox="0 0 20 20"><path d="M4.500 1.500V15.500L8 12.500 10.500 18.500 13 17.500 10.500 11.500H15Z" fill="#f4f4f4" stroke="#777" stroke-width="1.500"/></svg></span>
        <span><svg width="20" height="20" viewBox="0 0 20 20"><path d="M4 4V16.500H12M4 9.500H12" stroke="#666" stroke-width="1.500" fill="none"/><path d="M1 .8H8V4.200H1ZM11.500 7.800H19V11.500H11.500ZM11.500 15H19V18.800H11.500Z" fill="#eee" stroke="#666" stroke-width="1.500"/></svg></span>
        <span><svg width="20" height="20" viewBox="0 0 20 20"><path d="M.8 9V17H8V9M9 7.500H17V10" fill="none" stroke="#777" stroke-width="1.500"/><path d="M0 2 2 0H10V7L8 9H0Z" fill="#3cc4d0"/><path d="M14.500 9.500V20M9.500 14.800H20" stroke="#1faa4a" stroke-width="2.800"/></svg></span>
        <span class="on"><svg class="amber" width="19" height="19"><use href="#warn"/></svg>ERRORS</span>
        <span><svg width="20" height="20" viewBox="0 0 20 20"><path d="M1 1H16V16H1ZM5 1V6L1 9M10 1V4L14 7M1 13 5 10" fill="#e8e8e8" stroke="#666" stroke-width="1.400"/><path d="M14 14 19.500 19.500" stroke="#a37344" stroke-width="2.400"/><circle cx="11" cy="11" r="4.600" fill="#eafaff" stroke="#888"/><path d="M7.500 11.500 9.500 9.500 12 12.500 14 10.500" stroke="#27b5d8" stroke-width="1.500" fill="none"/></svg></span>
      </div>
      <div class="results">Results:</div>
      <div class="tree">
        <div class="thead"><span>Error Details</span><span>Layer</span>
          <svg width="11" height="6" viewBox="0 0 11 6"><path d="M1 .5 5.500 4.500 10 .5" fill="none" stroke="#666"/></svg></div>
        <div class="row r1"><s></s><b>Errors (0)</b></div>
        <div class="row r2"><s></s><b>Approved (2)</b></div>
        <div class="row r3"><s></s><span>Board Ou...</span></div>
        <div class="row r4 sel"><svg class="gray" width="15" height="14"><use href="#warn"/></svg><span>S...</span><span>Top (1)</span></div>
        <div class="row r5"><svg class="gray" width="15" height="14"><use href="#warn"/></svg><span>S...</span><span>Top (1)</span>
          <div class="tip">Smd-Hole, Board Outline Clearance</div></div>
      </div>
      <div class="foot"><i></i><span>Centered</span><div class="btns"><button disabled>Edit rule</button><button class="ok">Clear all</button><button class="ap" disabled>Approve</button></div></div>
    </section>
  </div>
</main>
</div>
</body>
</html>
```
FILE: styles.css
```
* { box-sizing: border-box; }
body { margin: 0; width: 1803px; height: 953px; overflow: hidden; display: flex; flex-direction: column; background: #f1f1f1; font-family: "Liberation Sans", Arial, sans-serif; color: #3c3c3c; }
.defs { position: absolute; }
svg { display: block; flex: none; }
s { display: inline-block; width: 0; height: 0; border: 4px solid transparent; border-top: 6px solid #333; border-bottom: 0; text-decoration: none; flex: none; }
.ic { fill: none; stroke: #666; }

/* top bar */
.topbar { height: 33px; margin-top: -10px; flex: none; display: flex; align-items: center; background: #cacaca; }
.team { width: 272px; display: flex; align-items: center; gap: 14px; font-size: 17px; color: #666; height: 26px; }
.team span { margin-left: 1px; line-height: 20px; margin-top: -6px; }
.team svg { margin-top: -3px; margin-left: 1px; }
.team-tools { width: 110px; display: flex; align-items: center; gap: 19px; margin-top: -6px; }
.team-tools svg:last-child { margin-left: 1px; }
.quick { width: 231px; display: flex; align-items: center; margin-top: -2px; }
.q1 { margin-left: 12px; } .q2 { margin-left: 24px; } .q3 { margin-left: 24px; } .q4 { margin-left: 25px; } .q5 { margin-left: 24px; }
.quick svg { position: relative; top: -1px; }
.tabs { display: flex; gap: 5px; align-self: stretch; }
.tab { width: 202px; background: #bababa; display: flex; align-items: center; padding: 0 8px 0 34px; font-size: 15px; color: #666; }
.tab span { margin-left: 6px; line-height: 20px; }
.tab .close { margin-left: auto; color: #808080; }
.tab.home { width: 49px; padding: 0 0 0 17px; }
.tab.home svg { margin-top: 0; }
.tab.t21 { width: 203px; padding-right: 8px; }
.tab.t21 span { margin-left: 5px; }
.tab.active { background: #f1f1f1; color: #444; }
.tab.desk { width: 203px; padding: 0 8px 0 22px; }
.tab.desk span { margin-left: 7px; letter-spacing: .1px; }
.mini { width: 35px; background: #bababa; display: flex; align-items: center; justify-content: center; }
.mini.light { background: #d8d8d8; }
.account { flex: 1; display: flex; align-items: center; margin-top: -6px; padding-left: 15px; gap: 21px; }
.avatar { width: 31px; height: 31px; border-radius: 50%; background: #f0f0f0; color: #555; font-size: 14px; display: flex; align-items: center; justify-content: center; margin-left: 5px; }

.app { flex: 1; display: flex; min-height: 0; }

/* data panel */
.side { width: 383px; background: #e6e6e6; border-right: 1px solid #999; overflow: hidden; display: flex; flex-direction: column; color: #666; }
.seg { display: flex; margin: 16px 0 0 -12px; width: 350px; height: 35px; border: 1px solid #999; border-radius: 4px; font-size: 16px; flex: none; }
.seg span { flex: 1; display: flex; align-items: center; justify-content: center; }
.seg .on { flex: 0 0 132px; background: #fbfbfb; border-right: 2px solid #999; justify-content: flex-start; padding-left: 5px; }
.actions { display: flex; align-items: center; margin: 12px 0 0 116px; height: 35px; flex: none; }
.btn-up { width: 76px; height: 35px; border-radius: 3px; background: #6997cb; color: #fff; font-weight: bold; line-height: 36px; text-align: center; font-size: 15px; }
.btn-nf { width: 104px; height: 35px; border: 1px solid #999; border-radius: 4px; line-height: 36px; text-align: center; margin: 0 10px 0 7px; font-size: 15.500px; }
.actions svg { margin-top: -1px; }
.crumb { display: flex; justify-content: space-between; align-items: center; height: 24px; margin: 17px 49px 0 -13px; font-weight: bold; font-size: 15px; flex: none; }
.crumb svg { margin-top: 5px; overflow: visible; }
.scroller { flex: 1; display: flex; margin-top: 32px; overflow: hidden; min-height: 0; }
.list { width: 352px; margin-left: -12px; flex: none; display: flex; flex-direction: column; gap: 14px; margin-top: -74px; }
.card { height: 86px; flex: none; border-radius: 3px; background: #fdfdfd; display: grid; grid-template: 32px 20px 1fr / 1fr 27px; padding-left: 8px; }
.card.sel { box-shadow: 0 0 0 1px #6997d0; }
.card b { display: flex; align-items: center; gap: 7px; font-size: 16px; letter-spacing: .17px; white-space: nowrap; line-height: 20px; padding-top: 3px; margin-left: -1px; }
.card i { grid-row: 2; grid-column: 1 / 3; font-style: normal; font-size: 15px; color: #999; line-height: 20px; margin-left: -1px; }
.flag { grid-column: 2; margin-top: 8px; color: #444; }
.flag.dim { color: #999; }
.ver { grid-row: 3; grid-column: 1 / 3; justify-self: end; margin: 5px 7px 0 0; width: 37px; height: 22px; border: 1px solid #bbb; border-radius: 3px; display: flex; align-items: center; justify-content: flex-end; gap: 2px; padding-right: 2px; font-size: 14px; letter-spacing: -.5px; color: #666; line-height: 18px; padding-bottom: 1px; }
.ver.w { width: 43px; }
.ver s { border-top-color: #666; margin-top: 3px; }
.glow { box-shadow: 0 0 4px 1px #6fcbf7; }
.rail { flex: 1; padding: 458px 0 0 16px; }
.thumb { width: 10px; height: 98px; border-radius: 5px; background: #b5b5b5; }

/* ribbon */
.main { flex: 1; min-width: 0; display: flex; flex-direction: column; }
.ribbon { height: 103px; flex: none; border-bottom: 1px solid #ccc; }
nav { height: 30px; display: flex; gap: 28px; padding-left: 36px; font-size: 14px; letter-spacing: -.25px; }
nav span { padding: 4px 15px 0; line-height: 20px; border-bottom: 4px solid transparent; white-space: nowrap; height: 30px; }
nav .on { color: #0696d7; font-weight: bold; border-color: #0696d7; letter-spacing: -.3px; padding-right: 16px; }
.n-rules { margin-left: -2px; }
.n-auto { margin-left: -1px; } .n-sim { margin-left: 1px; } .n-lib { margin-left: 3px; }
.groups { display: flex; margin-top: -1px; }
.group { display: flex; flex-direction: column; align-items: center; height: 70px; }
.icons { display: flex; height: 48px; }
.icons svg { width: 54px; height: 48px; }
.group label { display: flex; align-items: center; gap: 4px; font-size: 14px; letter-spacing: -.3px; line-height: 18px; margin-top: 3px; white-space: nowrap; }
.group + .group::before { content: ""; align-self: flex-start; width: 1px; height: 64px; background: #ccc; margin: 4px 0 -68px; }
label s { border-width: 6px 3.500px 0; }
.g-switch { width: 116px; padding-right: 2px; } .g-view { width: 80px; } .g-mfg { width: 229px; } .g-out { width: 121px; } .g-sel { width: 99px; }
.g-switch label { margin-right: 6px; }
.g-view .icons, .g-mfg .icons { margin-left: 1px; }
.g-view label { margin-left: 3px; } .g-mfg label { margin-right: 2px; } .g-out label { margin-right: 3px; } .g-sel label { margin-left: 3px; }
.odb { font: bold 24px "DejaVu Sans Mono", monospace; fill: #fff; text-anchor: middle; letter-spacing: 2px; }

/* editor */
.work { flex: 1; display: flex; min-height: 0; }
.editor { width: 937px; display: flex; flex-direction: column; }
.cmdrow, .panel { font-family: "Noto Sans", "Open Sans", sans-serif; font-size: 15px; }
.cmdrow { height: 46px; display: flex; align-items: center; padding: 2px 6px 0 10px; flex: none; }
.layer { width: 264px; height: 32px; border: 1px solid #999; background: #fff; display: flex; align-items: center; padding: 0 7px 0 5px; color: #111; }
.layer em { width: 25px; height: 25px; background: #a00a0a; margin-right: 8px; }
.layer s, .cmd s { margin-left: auto; border-top-color: #666; }
.coord { width: 201px; padding-left: 24px; }
.cmd { flex: 1; height: 32px; border: 1px solid #999; display: flex; align-items: center; padding: 0 7px; color: #bbb; letter-spacing: -.4px; white-space: nowrap; }
.stage { flex: 1; display: grid; grid-template: 755px 1fr / 921px 1fr; }
.canvas { background: #282828; position: relative; }
.navbar { position: absolute; left: 305px; top: 720px; display: flex; background: #f1f1f1; }
.navbar svg { width: 32.400px; height: 30px; }
.navbar svg:not(.hot):not(.wide) { transform: translateX(-.7px); }
.navbar .wide { width: 39px; }
.navbar .hot { background: #0696d7; }
.vbar { padding: 0 2px 0 6px; display: flex; }
.vbar div { flex: 1; background: #999; border-radius: 4px 4px 0 0; }
.hbar { grid-column: 1 / 3; padding-top: 6px; position: relative; }
.hbar div { height: 8px; width: 925px; background: #999; border-radius: 4px 0 0 4px; }
.hw { position: absolute; left: 884px; top: 0; }
.hb { position: absolute; left: 917px; top: 1px; }
.pads, .plus, .vias { fill: none; stroke: none; }
.pads { marker: url(#pad); }
.vias { marker: url(#via); }
.plus { stroke: #fff; stroke-width: 3.500; }
.silk { font: 18.500px "Liberation Sans", sans-serif; fill: #d0383c; }
.silk .sn { font-size: 22px; }
.gdim path { fill: none; stroke: #b0b0b0; stroke-width: 3.600; }
.gdim .ar { marker-start: url(#tip); marker-end: url(#tip); }
.gdim text { font: 24px "Liberation Sans", sans-serif; letter-spacing: -1px; fill: #c4c4c4; text-anchor: middle; }
.rdim path { fill: none; stroke: #c9353a; stroke-width: 3; }
.rdim text { font: 20px "Liberation Sans", sans-serif; fill: #c9353a; }

/* errors panel */
.panel { flex: 1; padding: 7px 16px 0 12px; display: flex; flex-direction: column; color: #3c3c3c; }
.ptabs { display: flex; height: 30px; flex: none; }
.ptabs span { width: 52.800px; background: #d8d8d8; border-right: 2px solid #c6c6c6; display: flex; align-items: center; padding-left: 13px; padding-bottom: 2px; font-size: 14px; letter-spacing: -.3px; }
.ptabs .on { width: 124px; background: #f4f4f4; padding-left: 13px; gap: 16px; }
.ptabs span:last-child { width: 52px; border: 0; padding-left: 12px; }
.amber { color: #f5b301; --mark: #222; }
.gray { color: #999; --mark: #fff; }
.results { margin: 14px 0 0 12px; line-height: 22px; color: #111; letter-spacing: -.3px; }
.tree { margin: 9px 0 0 12px; width: 443px; height: 695px; border: 1px solid #0696d7; background: #fff; flex: none; white-space: nowrap; overflow: hidden; }
.thead { height: 28px; display: flex; align-items: center; padding-left: 5px; color: #111; letter-spacing: -.35px; position: relative; }
.thead span { height: 28px; line-height: 30px; }
.thead span:first-child { width: 128px; border-right: 1px solid #ddd; }
.thead span + span { padding-left: 5px; }
.thead svg { position: absolute; left: 282px; top: 2px; }
.row { display: flex; align-items: center; height: 22px; }
.row s { border-width: 8px 5px 0; border-top-color: #666; margin-left: 8px; }
.row b { margin-left: 11px; letter-spacing: .4px; }
.r3 { height: 20px; letter-spacing: -.4px; } .r3 s { margin-left: 33px; } .r3 span { margin-left: 11px; }
.r4, .r5 { height: 24px; padding-left: 79px; position: relative; }
.r4 span, .r5 span { margin-left: 8px; width: 35px; flex: none; }
.r4 span + span, .r5 span + span { width: 60px; margin-left: -1px; }
.row.sel { background: #cce8f6; }
.r5 { height: 22px; }
.tip { position: absolute; left: 108px; top: 10px; width: 270px; height: 30px; background: #fff; color: #111; padding: 4px 0 0 8px; line-height: 22px; letter-spacing: .15px; }
.foot { display: flex; align-items: center; padding-left: 12px; margin-top: 8px; height: 32px; color: #111; }
.foot i { width: 20px; height: 20px; border: 1px solid #777; border-radius: 3px; background: #fff; margin-right: 7px; }
.foot > span { letter-spacing: -.6px; }
.btns { margin-left: auto; display: flex; gap: 13px; }
button { width: 77px; height: 32px; border: 1px solid #ccc; border-radius: 4px; background: #ececec; color: #8c8c8c; font: inherit; letter-spacing: -.3px; padding: 0; }
button.ok { width: 75px; background: #fff; border-color: #777; color: #111; }
button.ap { width: 78px; }
```
